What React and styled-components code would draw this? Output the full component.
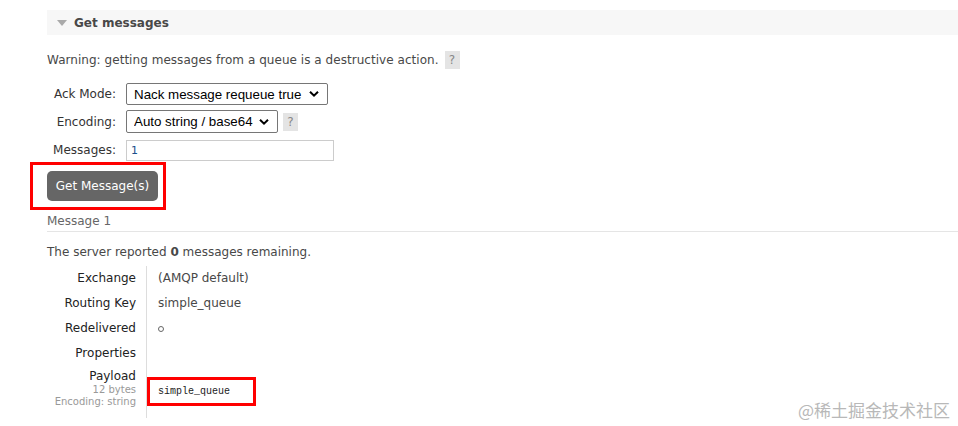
import React from "react";
import styled, { createGlobalStyle } from "styled-components";

const Global = createGlobalStyle`
  html, body { margin: 0; padding: 0; background: #fff; }
  body { font-family: "DejaVu Sans", Verdana, sans-serif; font-size: 12px; color: #484848; }
  #root { width: 958px; height: 426px; overflow: hidden; position: relative; }
`;

const Page = styled.div`
  padding: 10px 0 0 47px;
`;

const SectionHeader = styled.div`
  height: 25px;
  background: #f7f7f7;
  display: flex;
  align-items: center;
  gap: 7px;
  padding-left: 10px;
  font-weight: bold;
  font-size: 12px;
  color: #484848;
`;

const Triangle = styled.span`
  width: 0;
  height: 0;
  border-left: 5px solid transparent;
  border-right: 5px solid transparent;
  border-top: 6px solid #aaa;
  margin-top: 1px;
`;

const Warning = styled.p`
  margin: 16px 0 0;
  display: flex;
  align-items: center;
  gap: 6px;
  height: 18px;
  color: #484848;
  letter-spacing: 0.04px;
`;

const Help = styled.span`
  display: inline-flex;
  align-items: center;
  justify-content: center;
  width: 15px;
  height: 18px;
  background: #e4e4e4;
  color: #888;
  font-size: 12px;
`;

const Form = styled.div`
  margin-top: 14px;
  display: grid;
  grid-template-columns: 69px auto;
  column-gap: 10px;
  row-gap: 5px;
  align-items: center;
  justify-items: start;
`;

const Label = styled.label`
  justify-self: end;
  color: #333;
  font-size: 12px;
`;

const Field = styled.div`
  display: flex;
  align-items: center;
  gap: 5px;
`;

const SelectWrap = styled.div`
  position: relative;
  width: ${(p) => p.$w}px;
  height: ${(p) => p.$h}px;
`;

const Select = styled.select`
  appearance: none;
  width: 100%;
  height: 100%;
  box-sizing: border-box;
  border: 1px solid #767676;
  border-radius: 2px;
  background: #fff;
  font-family: "Liberation Sans", Arial, sans-serif;
  font-size: 13.33px;
  color: #000;
  padding: 0 0 0 7px;
`;

const Chevron = styled.svg`
  position: absolute;
  right: 9px;
  top: 50%;
  transform: translateY(-50%);
  pointer-events: none;
`;

const Input = styled.input`
  width: 208px;
  height: 21px;
  box-sizing: border-box;
  border: 1px solid #ccc;
  padding: 0 4px;
  font-family: "DejaVu Sans", Verdana, sans-serif;
  font-size: 11px;
  color: #1c4f8c;
  margin-top: 2px;
`;

const Annotated = styled.div`
  display: flex;
  width: fit-content;
  border: 3px solid #f00;
  padding: 6px 5px 6px 14px;
  margin: 1px 0 0 -17px;
`;

const Button = styled.button`
  display: block;
  width: 111px;
  height: 30px;
  border: none;
  border-radius: 5px;
  background: #666;
  color: #fff;
  font-family: "DejaVu Sans", Verdana, sans-serif;
  font-size: 12px;
  padding: 0;
`;

const MessageTitle = styled.div`
  margin-top: 4px;
  padding-bottom: 2px;
  border-bottom: 1px solid #e5e5e5;
  color: #666;
  line-height: 15px;
`;

const Remaining = styled.p`
  margin: 13px 0 0;
  line-height: 15px;
  b { font-weight: bold; }
`;

const Details = styled.table`
  margin-top: 6px;
  border-collapse: collapse;
`;

const Th = styled.th`
  width: 89px;
  white-space: nowrap;
  text-align: right;
  font-weight: normal;
  color: #222;
  padding: 0 10px 0 0;
  height: 25px;
  vertical-align: ${(p) => (p.$top ? "top" : "middle")};
  padding-top: ${(p) => (p.$top ? "3px" : "0")};
  padding-bottom: ${(p) => (p.$top ? "10px" : "0")};
  line-height: 15px;
`;

const Sub = styled.div`
  font-size: 10px;
  line-height: 12px;
  color: #999;
`;

const Td = styled.td`
  border-left: 1px solid #ddd;
  padding: 0 0 0 11px;
  color: #484848;
  vertical-align: ${(p) => (p.$top ? "top" : "middle")};
  padding-top: ${(p) => (p.$top ? "11px" : "0")};
  line-height: 15px;
`;

const Circle = styled.span`
  display: inline-block;
  width: 4px;
  height: 4px;
  border: 1px solid #666;
  border-radius: 50%;
  margin-top: 4px;
`;

const PayloadBox = styled.div`
  box-sizing: border-box;
  margin-left: -11px;
  width: 109px;
  height: 29px;
  border: 3px solid #f00;
  padding-left: 8px;
  display: flex;
  align-items: center;
  font-family: "Liberation Mono", "DejaVu Sans Mono", monospace;
  font-size: 10px;
  color: #222;
`;

const Watermark = styled.div`
  position: absolute;
  right: 8px;
  bottom: 6px;
  font-family: "Noto Sans CJK SC", sans-serif;
  font-size: 17px;
  color: #b8b8b8;
  line-height: 20px;
`;

const Chev = () => (
  <Chevron width="10" height="7" viewBox="0 0 10 7">
    <path d="M1 1.2 L5 5.2 L9 1.2" fill="none" stroke="#000" strokeWidth="2" />
  </Chevron>
);

export default function App() {
  return (
    <>
      <Global />
      <Page>
        <SectionHeader>
          <Triangle />
          Get messages
        </SectionHeader>
        <Warning>
          Warning: getting messages from a queue is a destructive action.
          <Help>?</Help>
        </Warning>
        <Form>
          <Label>Ack Mode:</Label>
          <Field>
            <SelectWrap $w={202} $h={22}>
              <Select defaultValue="nack">
                <option value="nack">Nack message requeue true</option>
              </Select>
              <Chev />
            </SelectWrap>
          </Field>
          <Label>Encoding:</Label>
          <Field>
            <SelectWrap $w={152} $h={23}>
              <Select defaultValue="auto">
                <option value="auto">Auto string / base64</option>
              </Select>
              <Chev />
            </SelectWrap>
            <Help>?</Help>
          </Field>
          <Label>Messages:</Label>
          <Field>
            <Input defaultValue="1" />
          </Field>
        </Form>
        <Annotated>
          <Button>Get Message(s)</Button>
        </Annotated>
        <MessageTitle>Message 1</MessageTitle>
        <Remaining>
          The server reported <b>0</b> messages remaining.
        </Remaining>
        <Details>
          <tbody>
            <tr>
              <Th>Exchange</Th>
              <Td>(AMQP default)</Td>
            </tr>
            <tr>
              <Th>Routing Key</Th>
              <Td>simple_queue</Td>
            </tr>
            <tr>
              <Th>Redelivered</Th>
              <Td><Circle /></Td>
            </tr>
            <tr>
              <Th>Properties</Th>
              <Td></Td>
            </tr>
            <tr>
              <Th $top>
                Payload
                <Sub>12 bytes</Sub>
                <Sub>Encoding: string</Sub>
              </Th>
              <Td $top>
                <PayloadBox>simple_queue</PayloadBox>
              </Td>
            </tr>
          </tbody>
        </Details>
      </Page>
      <Watermark>@稀土掘金技术社区</Watermark>
    </>
  );
}
